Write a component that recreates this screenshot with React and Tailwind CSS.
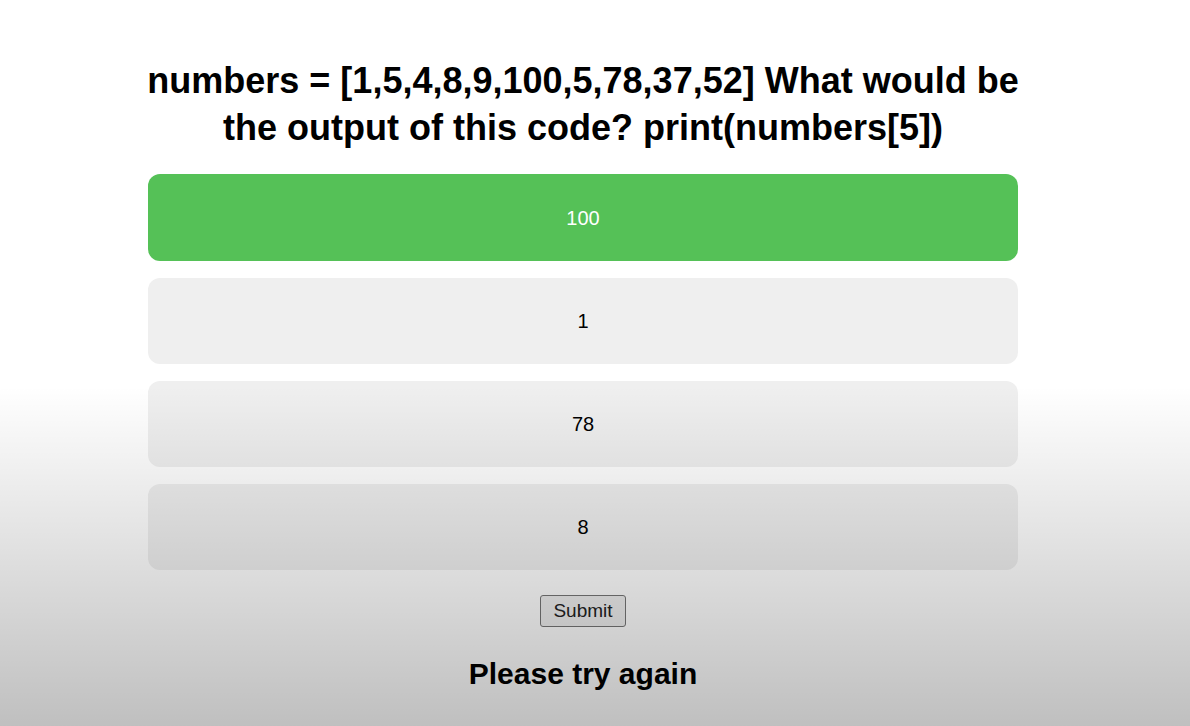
import { useState } from 'react'

const options = ['100', '1', '78', '8']

export default function App() {
  const [selected, setSelected] = useState('100')

  return (
    <div className="relative min-h-screen h-[726px] overflow-hidden bg-white font-['Liberation_Sans',Arial,sans-serif] text-black">
      <div className="flex flex-col items-center pr-[24px] pt-[57px]">
        <h1 className="w-[890px] text-center text-[36px] font-bold leading-[47px]">
          numbers = [1,5,4,8,9,100,5,78,37,52] What would be the output of this code? print(numbers[5])
        </h1>

        <div className="mt-[23px] flex w-[870px] flex-col gap-[17px]">
          {options.map((o) => (
            <button
              key={o}
              onClick={() => setSelected(o)}
              className={
                o === selected
                  ? 'h-[87px] rounded-[12px] bg-[#55c157] text-[20px] text-white'
                  : 'h-[86px] rounded-[12px] bg-[#efefef] text-[20px] text-black'
              }
            >
              {o}
            </button>
          ))}
        </div>

        <button className="mt-[25px] h-[32px] w-[86px] rounded-[3px] border border-[#767676] bg-[#efefef] text-[19px] text-[#222]">
          Submit
        </button>

        <p className="mt-[27px] text-[30px] font-bold leading-[40px]">Please try again</p>
      </div>

      {/* fade overlay from the screenshot */}
      <div className="pointer-events-none absolute inset-x-0 bottom-0 h-[340px] bg-gradient-to-b from-transparent to-black/25" />
    </div>
  )
}
